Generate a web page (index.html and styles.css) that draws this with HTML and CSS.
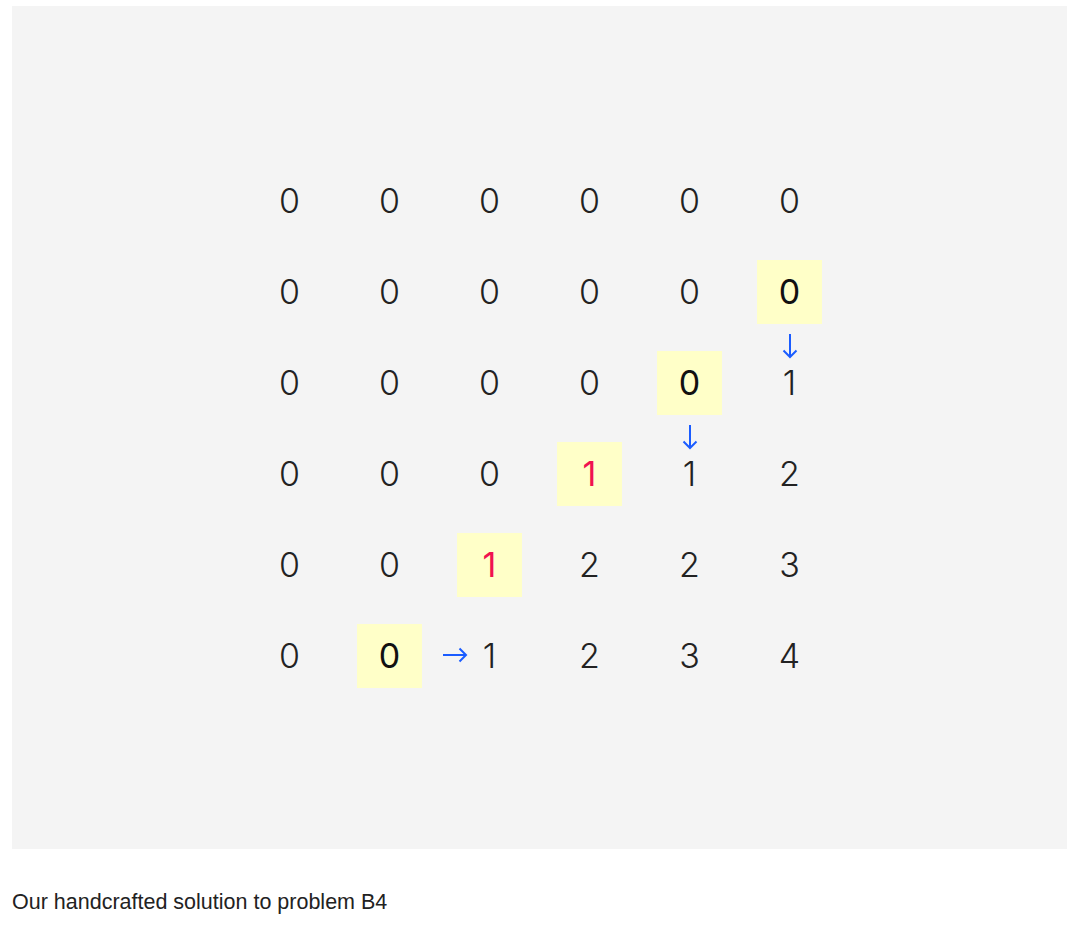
FILE: index.html
```html
<!DOCTYPE html>
<html>
<head>
<meta charset="utf-8">
<link rel="stylesheet" href="styles.css">
</head>
<body>
<div class="panel">
  <div class="grid">
    <div class="cell">0</div><div class="cell">0</div><div class="cell">0</div><div class="cell">0</div><div class="cell">0</div><div class="cell">0</div>
    <div class="cell">0</div><div class="cell">0</div><div class="cell">0</div><div class="cell">0</div><div class="cell">0</div><div class="cell"><span class="hl">0</span></div>
    <div class="cell">0</div><div class="cell">0</div><div class="cell">0</div><div class="cell">0</div><div class="cell"><span class="hl">0</span></div><div class="cell">1<svg class="arrow down" width="16" height="26" viewBox="0 0 16 26"><path d="M8 1 V24 M1.5 17.5 L8 24 L14.5 17.5" fill="none" stroke="#1a5cff" stroke-width="2"/></svg></div>
    <div class="cell">0</div><div class="cell">0</div><div class="cell">0</div><div class="cell"><span class="hl red">1</span></div><div class="cell">1<svg class="arrow down" width="16" height="26" viewBox="0 0 16 26"><path d="M8 1 V24 M1.5 17.5 L8 24 L14.5 17.5" fill="none" stroke="#1a5cff" stroke-width="2"/></svg></div><div class="cell">2</div>
    <div class="cell">0</div><div class="cell">0</div><div class="cell"><span class="hl red">1</span></div><div class="cell">2</div><div class="cell">2</div><div class="cell">3</div>
    <div class="cell">0</div><div class="cell"><span class="hl">0</span></div><div class="cell">1<svg class="arrow right" width="26" height="16" viewBox="0 0 26 16"><path d="M1 8 H24 M17.5 1.5 L24 8 L17.5 14.5" fill="none" stroke="#1a5cff" stroke-width="2"/></svg></div><div class="cell">2</div><div class="cell">3</div><div class="cell">4</div>
  </div>
</div>
<p class="caption">Our handcrafted solution to problem B4</p>
</body>
</html>
```
FILE: styles.css
```css
html, body {
  margin: 0;
  padding: 0;
  background: #ffffff;
}
body {
  font-family: "Liberation Sans", Arial, sans-serif;
}
.panel {
  margin: 6px 13px 0 12px;
  height: 843px;
  background: #f4f4f4;
  display: flex;
  align-items: center;
  justify-content: center;
}
.grid {
  display: grid;
  grid-template-columns: repeat(6, 100px);
  grid-auto-rows: 91px;
  margin-top: 1px;
}
.cell {
  position: relative;
  display: flex;
  align-items: center;
  justify-content: center;
  font-family: Inter, "Liberation Sans", sans-serif;
  font-weight: 300;
  font-size: 34px;
  color: #222222;
}
.hl {
  width: 65px;
  height: 64px;
  background: #ffffc8;
  display: flex;
  align-items: center;
  justify-content: center;
  font-weight: 400;
  color: #111111;
}
.hl.red {
  color: #f0124f;
}
.arrow {
  position: absolute;
}
.arrow.down {
  left: 42px;
  top: -4px;
}
.arrow.right {
  left: 2px;
  top: 37px;
}
.caption {
  margin: 40px 0 0 12px;
  font-size: 21.5px;
  line-height: 26px;
  color: #222222;
}
```
